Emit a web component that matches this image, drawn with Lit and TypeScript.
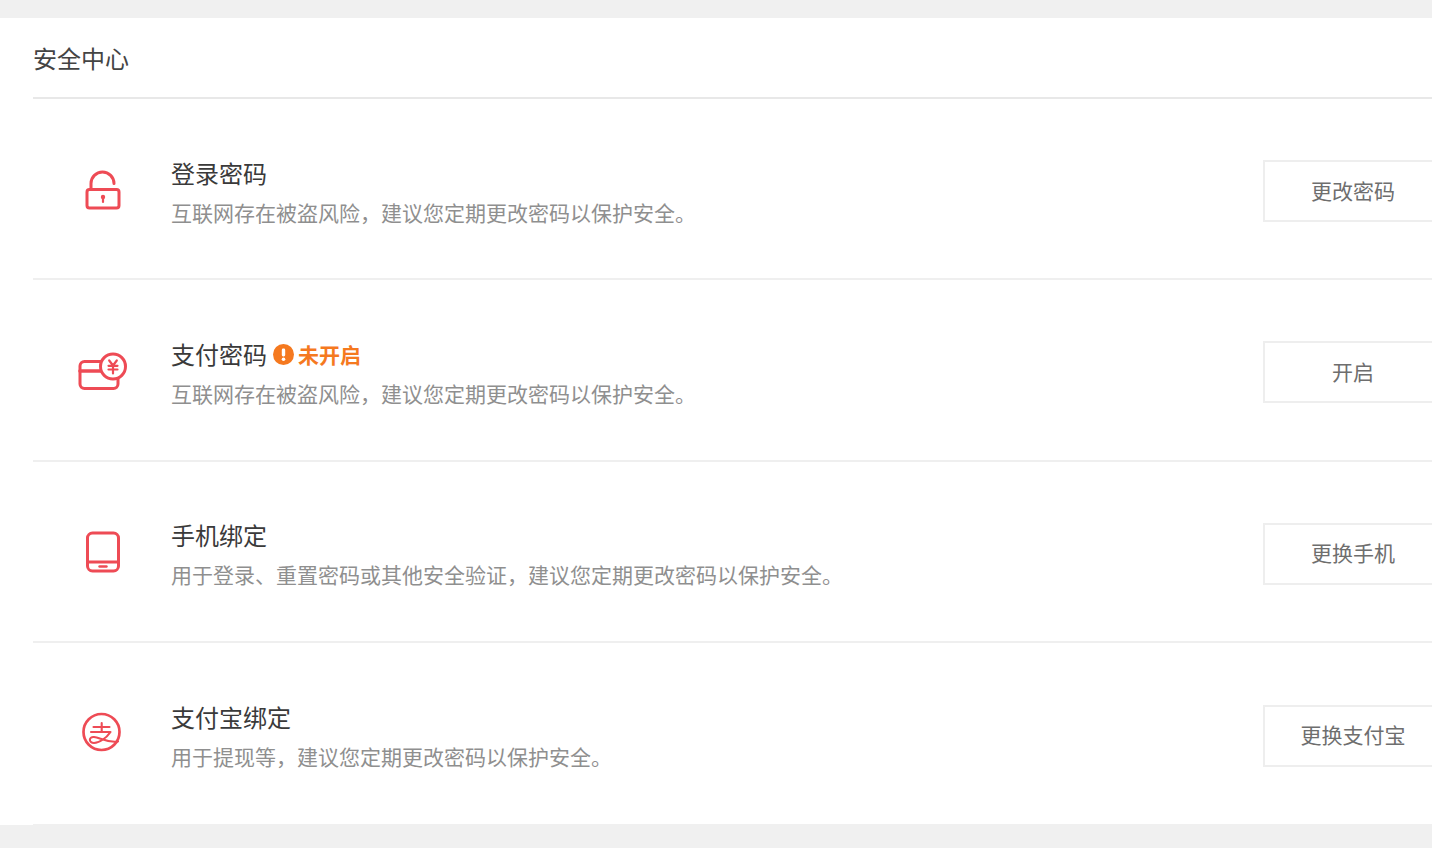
import { LitElement, html, css, svg } from "lit";
import { customElement } from "lit/decorators.js";

const stroke = (body: unknown) => html`<svg class="icon" viewBox="0 0 60 60" fill="none" stroke="#ee4b55" stroke-width="3" stroke-linecap="round" stroke-linejoin="round">${body}</svg>`;

const lockIcon = stroke(svg`
  <path d="M18 30v-5.500a11.500 11.500 0 0 1 23 0"/>
  <rect x="14" y="30.500" width="32" height="18.500" rx="2.500"/>
  <circle cx="30" cy="38" r="2.200" fill="#ee4b55" stroke="none"/>
  <path d="M30 38v5" stroke-width="2.200"/>`);

const payIcon = stroke(svg`
  <rect x="7" y="21.500" width="38" height="27" rx="4.500"/>
  <path d="M7 31h26" stroke-width="3.600"/>
  <circle cx="40" cy="26.500" r="12.500" fill="#fff"/>
  <path d="M36.200 20.500l3.800 5 3.800-5M35.500 25.800h9M35.500 29.500h9M40 25.500V33.500" stroke-width="2.200"/>`);

const phoneIcon = stroke(svg`
  <rect x="14.500" y="12" width="31" height="38" rx="5"/>
  <path d="M14.500 41h31"/>
  <path d="M26.500 45.500h7" stroke-width="2.400"/>`);

const alipayIcon = stroke(svg`
  <circle cx="28.500" cy="29" r="18" stroke-width="2.700"/>
  <path d="M20.500 24h16M28.700 20v8.500M18 29h19.500C33.500 35 26 40 21 40C15.500 40 15.500 33.500 21 34C27 34.500 33 40 45 38.500" stroke-width="2.100"/>`);

interface Row {
  icon: unknown;
  title: string;
  warn?: string;
  desc: string;
  action: string;
}

const rows: Row[] = [
  { icon: lockIcon, title: "登录密码", desc: "互联网存在被盗风险，建议您定期更改密码以保护安全。", action: "更改密码" },
  { icon: payIcon, title: "支付密码", warn: "未开启", desc: "互联网存在被盗风险，建议您定期更改密码以保护安全。", action: "开启" },
  { icon: phoneIcon, title: "手机绑定", desc: "用于登录、重置密码或其他安全验证，建议您定期更改密码以保护安全。", action: "更换手机" },
  { icon: alipayIcon, title: "支付宝绑定", desc: "用于提现等，建议您定期更改密码以保护安全。", action: "更换支付宝" },
];

@customElement("app-root")
export class AppRoot extends LitElement {
  static styles = css`
    :host {
      display: block;
      height: 848px;
      overflow: hidden;
      background: #f0f0f0;
      padding-top: 18px;
      box-sizing: border-box;
      font-family: "Noto Sans CJK SC", "Liberation Sans", sans-serif;
      color: #444;
    }
    .card {
      background: #fff;
      padding-left: 33px;
      height: 807px;
      box-sizing: border-box;
    }
    h1 {
      margin: 0;
      height: 81px;
      box-sizing: border-box;
      border-bottom: 2px solid #e8e8e8;
      font-size: 24px;
      font-weight: 400;
      line-height: 80px;
      color: #444;
    }
    .row {
      display: flex;
      align-items: center;
      height: 181.3px;
      box-sizing: border-box;
      border-bottom: 2px solid #efefef;
    }
    .row:last-child {
      height: 183px;
      border-bottom-color: #f0f0f0;
    }
    .icon-cell {
      width: 138px;
      flex: none;
      padding-left: 40px;
      box-sizing: border-box;
      display: flex;
    }
    .icon {
      width: 60px;
      height: 60px;
      display: block;
    }
    .text {
      flex: 1;
      padding-top: 10px;
    }
    .title {
      display: flex;
      align-items: center;
      font-size: 24px;
      line-height: 36px;
      color: #3a3a3a;
    }
    .warn {
      display: flex;
      align-items: center;
      margin-left: 6px;
      font-size: 21px;
      font-weight: 700;
      color: #f5791f;
    }
    .warn svg {
      width: 21px;
      height: 21px;
      margin: 2px 4px 0 0;
    }
    .desc {
      font-size: 21px;
      line-height: 42px;
      color: #8f8f8f;
    }
    .action {
      flex: none;
      width: 180px;
      height: 62px;
      margin-top: 5px;
      margin-right: -11px;
      padding: 0 0 3px;
      box-sizing: border-box;
      border: 2px solid #eee;
      background: #fff;
      font: inherit;
      font-size: 21px;
      color: #6e6e6e;
    }
  `;

  render() {
    return html`
      <section class="card">
        <h1>安全中心</h1>
        ${rows.map(
          (r) => html`
            <div class="row">
              <div class="icon-cell">${r.icon}</div>
              <div class="text">
                <div class="title">
                  ${r.title}
                  ${r.warn
                    ? html`<span class="warn"
                        ><svg viewBox="0 0 21 21">
                          <circle cx="10.500" cy="10.500" r="10.500" fill="#f5791f"></circle>
                          <rect x="8.800" y="4.500" width="3.400" height="8" rx="1.400" fill="#fff"></rect>
                          <circle cx="10.500" cy="15.200" r="1.800" fill="#fff"></circle></svg
                        >${r.warn}</span
                      >`
                    : ""}
                </div>
                <div class="desc">${r.desc}</div>
              </div>
              <button class="action">${r.action}</button>
            </div>
          `
        )}
      </section>
    `;
  }
}
